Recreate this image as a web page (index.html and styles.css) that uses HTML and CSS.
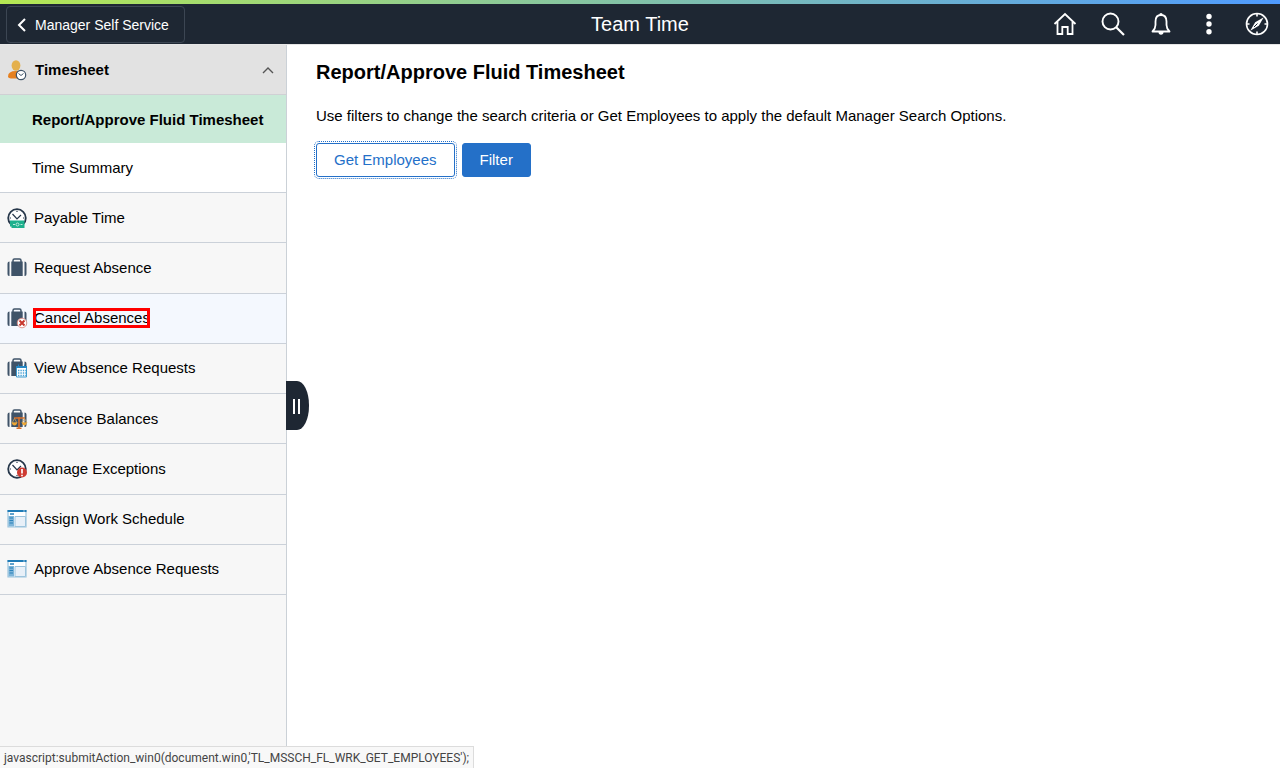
FILE: index.html
```html
<!DOCTYPE html>
<html lang="en">
<head>
<meta charset="utf-8">
<title>Team Time</title>
<link rel="stylesheet" href="styles.css">
</head>
<body>
<svg class="defs" aria-hidden="true">
  <defs>
    <g id="case">
      <path d="M6 4V2.500Q6 1 7.500 1h5Q14 1 14 2.500V4" fill="none" stroke="#3f5368" stroke-width="1.500"/>
      <path d="M2.500 3.500V18H2Q.5 18 .5 16V5.500Q.5 3.500 2.500 3.500zM4.300 3.500h11.400V18H4.300zM17.500 3.500Q19.500 3.500 19.500 5.500V16Q19.500 18 18 18h-.5z" fill="#3f5368"/>
    </g>
    <g id="clock">
      <circle cx="10" cy="10" r="8.800" fill="#fff" stroke="#26374a" stroke-width="1.800"/>
      <path d="M5.500 6l4.500 5 4-4M10 2.800v1.200M2.800 10H4M16 10h1.200M10 16v1.200" fill="none" stroke="#26374a" stroke-width="1.200"/>
    </g>
    <g id="window">
      <path d="M1 1.500h18v16.500H1z" fill="#fff" stroke="#9cc4dd" stroke-width="1.200"/>
      <path d="M.5 1h19v2H.5z" fill="#1f7bb6"/>
      <path d="M16 2h2" stroke="#9cc4dd"/>
      <path d="M3 5h4" stroke="#2b83bb" stroke-width="1.500"/>
      <path d="M1.500 7h5.500v10.500H1.500z" fill="#7db4d8"/>
      <path d="M2.500 9h3.500M2.500 11.500h3.500M2.500 14h3.500" stroke="#2b83bb"/>
      <path d="M8 7.500h10.500v10H8z" fill="#e8f0f8" stroke="#9cc4dd"/>
    </g>
  </defs>
</svg>
<header class="header">
  <button class="back" type="button">
    <svg width="10" height="16" viewBox="0 0 10 16" aria-hidden="true"><path d="M8 2L2 8l6 6" fill="none" stroke="#fff" stroke-width="2"/></svg>
    Manager Self Service
  </button>
  <h1 class="header-title">Team Time</h1>
  <nav class="tools" aria-label="Tools">
    <button class="tool" type="button" aria-label="Home"><svg viewBox="0 0 24 24"><path d="M1.500 12L12 2l10.500 10M4.500 10v12h4.800v-7h5.400v7h4.800V10" fill="none" stroke="#fff" stroke-width="1.800"/></svg></button>
    <button class="tool" type="button" aria-label="Search"><svg viewBox="0 0 24 24"><circle cx="9.500" cy="9.500" r="8" fill="none" stroke="#fff" stroke-width="1.900"/><path d="M15.200 15.200l7.800 7.800" stroke="#fff" stroke-width="2.200"/></svg></button>
    <button class="tool" type="button" aria-label="Notifications"><svg viewBox="0 0 24 24"><path d="M3.500 19.500c2-2 3-4 3-6.500V9.500C6.500 5.500 8.500 3 12 3s5.500 2.500 5.500 6.500V13c0 2.500 1 4.500 3 6.500z" fill="none" stroke="#fff" stroke-width="1.800" stroke-linejoin="round"/><path d="M10.300 3a1.700 1.900 0 0 1 3.400 0zM9.500 20h5a2.500 2.800 0 0 1-5 0z" fill="#fff"/></svg></button>
    <button class="tool" type="button" aria-label="Actions"><svg viewBox="0 0 24 24"><g fill="#fff"><circle cx="12" cy="4.500" r="2.700"/><circle cx="12" cy="12" r="2.700"/><circle cx="12" cy="19.700" r="2.700"/></g></svg></button>
    <button class="tool" type="button" aria-label="Navigator"><svg viewBox="0 0 24 24"><circle cx="12" cy="12" r="10.500" fill="none" stroke="#fff" stroke-width="1.600"/><path d="M12 2v2.500M12 19.500V22M2 12h2.500M19.500 12H22" stroke="#fff" stroke-width="1.600"/><path d="M18.800 5.200L13.800 13.800 5.200 18.800 10.200 10.200z" fill="#fff"/><path d="M9 15l3.500-3.500" stroke="#1e2733"/></svg></button>
  </nav>
</header>
<div class="page">
  <nav class="sidebar" aria-label="Team Time">
    <button class="group" type="button" aria-expanded="true">
      <svg class="icon" viewBox="0 0 20 20" aria-hidden="true"><path d="M1 16.500Q1 11 9 11q6 0 8 4v3.500H6Q1 18.500 1 16.500z" fill="#e6801f"/><ellipse cx="9" cy="5.500" rx="4.400" ry="5.200" fill="#e4b04c"/><circle cx="14" cy="15" r="4.700" fill="#fff" stroke="#3f5368" stroke-width="1.200"/><path d="M11.500 13.500l2.500 2 2.500-2" fill="none" stroke="#3f5368"/></svg>
      <span class="group-name">Timesheet</span>
      <svg width="12" height="8" viewBox="0 0 12 8" aria-hidden="true"><path d="M1 7l5-5 5 5" fill="none" stroke="#555" stroke-width="1.400"/></svg>
    </button>
    <a class="sub current" href="#report" aria-current="page">Report/Approve Fluid Timesheet</a>
    <a class="sub" href="#summary">Time Summary</a>
    <div class="items">
      <a class="item" href="#payable"><svg class="icon" viewBox="0 0 20 20" aria-hidden="true"><use href="#clock"/><path d="M3 12.500h14.500v7.500H4.500v-1.500H3z" fill="#1db08c"/><path d="M6 16.500h2M13.500 16.500h2" stroke="#bdebdd"/><circle cx="10.500" cy="16.500" r="1.500" fill="none" stroke="#bdebdd"/></svg>Payable Time</a>
      <a class="item" href="#request"><svg class="icon" viewBox="0 0 20 20" aria-hidden="true"><use href="#case"/></svg>Request Absence</a>
      <a class="item hover" href="#cancel"><svg class="icon" viewBox="0 0 20 20" aria-hidden="true"><use href="#case"/><circle cx="15" cy="15" r="4.800" fill="#fff" stroke="#d98278" stroke-width=".8"/><path d="M12.500 12.500l5 5M17.500 12.500l-5 5" stroke="#c8372d" stroke-width="2"/></svg><span class="marked">Cancel Absences</span></a>
      <a class="item" href="#view"><svg class="icon" viewBox="0 0 20 20" aria-hidden="true"><use href="#case"/><path d="M9.500 8.500h10V19h-10z" fill="#fff" stroke="#3c9bd0"/><path d="M9 8h11v2H9z" fill="#2486c3"/><path d="M11 12.500h8M11 15h8M11 17.500h8" stroke="#4aa3d6" stroke-width="1.400" stroke-dasharray="1.400 1"/><path d="M11.500 6.500v2M17.500 6.500v2" stroke="#2486c3"/></svg>View Absence Requests</a>
      <a class="item" href="#balances"><svg class="icon" viewBox="0 0 20 20" aria-hidden="true"><use href="#case"/><path d="M12 8v11M7 9h11M9.500 19.200h5" stroke="#d9702a" stroke-width="1.600"/><path d="M7.500 9.500L5 14h5zM17.500 9.500L15 14h5z" fill="none" stroke="#c9a15c" stroke-width=".8"/><path d="M4.500 13.500h6q-1 3-3 3t-3-3zM14.500 13.500h5.500q-1 3-2.500 3t-3-3z" fill="#eda634"/></svg>Absence Balances</a>
      <a class="item" href="#exceptions"><svg class="icon" viewBox="0 0 20 20" aria-hidden="true"><use href="#clock"/><circle cx="15" cy="13.500" r="5" fill="#cf3b32"/><path d="M15 10v4.500M15 15.800v1.500" stroke="#fff" stroke-width="1.700"/></svg>Manage Exceptions</a>
      <a class="item" href="#assign"><svg class="icon" viewBox="0 0 20 20" aria-hidden="true"><use href="#window"/></svg>Assign Work Schedule</a>
      <a class="item" href="#approve"><svg class="icon" viewBox="0 0 20 20" aria-hidden="true"><use href="#window"/></svg>Approve Absence Requests</a>
    </div>
    <button class="handle" type="button" aria-label="Collapse panel"><span class="bar"></span><span class="bar"></span></button>
  </nav>
  <main class="content">
    <h2 class="title">Report/Approve Fluid Timesheet</h2>
    <p class="hint">Use filters to change the search criteria or Get Employees to apply the default Manager Search Options.</p>
    <div class="actions">
      <button class="btn focused" type="button">Get Employees</button>
      <button class="btn primary" type="button">Filter</button>
    </div>
  </main>
</div>
<div class="status">javascript:submitAction_win0(document.win0,'TL_MSSCH_FL_WRK_GET_EMPLOYEES');</div>
</body>
</html>
```
FILE: styles.css
```css
* { box-sizing: border-box; }

body {
  margin: 0;
  min-height: 100vh;
  display: flex;
  flex-direction: column;
  background: #fff;
  color: #000;
  font: 15px/20px "Liberation Sans", Arial, sans-serif;
}

body::before {
  content: "";
  height: 4px;
  background: linear-gradient(to right, #b5e853, #4f9bff);
}

button { font: inherit; cursor: pointer; }
a { color: inherit; text-decoration: none; }
.defs { position: absolute; width: 0; height: 0; }

.header {
  display: grid;
  grid-template-columns: 1fr auto 1fr;
  align-items: center;
  height: 41px;
  padding: 0 11px;
  background: #1e2733;
  border-bottom: 1px solid #e6e6e6;
  color: #fff;
}

.back {
  justify-self: start;
  display: flex;
  align-items: center;
  gap: 8px;
  height: 37px;
  margin-left: -5px;
  padding: 2px 15px 0 10px;
  border: 1px solid #3c4653;
  border-radius: 4px;
  background: none;
  color: #fff;
  font-size: 14px;
}

.header-title { margin: 0; font-size: 20px; font-weight: 400; }

.tools { justify-self: end; display: flex; gap: 24px; }

.tool {
  display: flex;
  width: 24px;
  height: 24px;
  padding: 0;
  border: 0;
  background: none;
}

.tool svg { width: 24px; height: 24px; }

.page { flex: 1; display: flex; }

.sidebar {
  position: relative;
  width: 287px;
  flex: none;
  display: flex;
  flex-direction: column;
  background: #f7f7f7;
  border-right: 1px solid #cbd1d7;
}

.group {
  display: flex;
  align-items: center;
  gap: 8px;
  height: 50px;
  padding: 0 12px 0 7px;
  border: 0;
  border-bottom: 1px solid #d0d0d4;
  background: #e2e2e2;
  color: #000;
  font-weight: 700;
  text-align: left;
}

.group-name { flex: 1; }
.icon { flex: none; width: 20px; height: 20px; overflow: visible; }

.sub {
  display: flex;
  align-items: center;
  height: 49px;
  padding-left: 32px;
  background: #fff;
}

.current { height: 48px; padding-top: 2px; background: #c9ead8; font-weight: 700; }

.items {
  display: grid;
  grid-auto-rows: 1fr;
  height: 403px;
  border-top: 1px solid #cbd1d9;
}

.item {
  display: flex;
  align-items: center;
  gap: 7px;
  padding-left: 7px;
  border-bottom: 1px solid #cbd1d9;
}

.hover { background: #f4f8fe; }

.marked {
  margin-left: -1px;
  padding-left: 1px;
  outline: 3px solid #f00;
  outline-offset: -3px;
}

.handle {
  position: absolute;
  left: 286px;
  top: 336px;
  display: flex;
  align-items: center;
  gap: 3px;
  width: 23px;
  height: 49px;
  padding: 2px 7px 0;
  border: 0;
  border-radius: 0 12px 12px 0 / 0 24px 24px 0;
  background: #1e2733;
}

.bar { width: 2px; height: 15px; background: #fff; }

.content { flex: 1; padding: 15px 29px; }
.title { margin: 0; font-size: 20px; line-height: 24px; }
.hint { margin: 22px 0 17px; }
.actions { display: flex; gap: 7px; }

.btn {
  height: 34px;
  padding: 0 17px;
  border: 1px solid #2470c8;
  border-radius: 3px;
  background: #fff;
  color: #2470c8;
}

.focused { outline: 1px dotted #2470c8; outline-offset: 1px; }
.primary { background: #2470c8; color: #fff; }

.status {
  position: fixed;
  left: 0;
  bottom: 0;
  padding: 1px 4px 0;
  border: 1px solid #dcdcdc;
  border-width: 1px 1px 0 0;
  background: #f8f8f8;
  color: #444;
  font: 12px/20px Roboto, sans-serif;
}
```
